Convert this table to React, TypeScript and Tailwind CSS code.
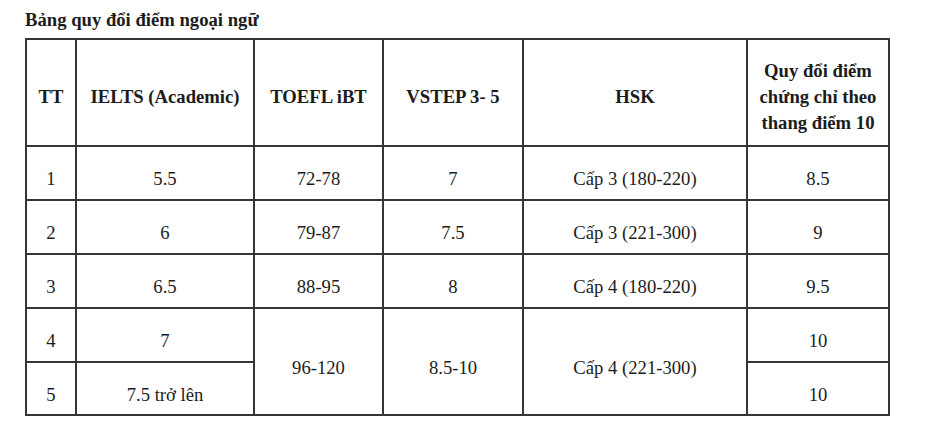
import React from 'react';

const head = 'border-2 border-[#363636] text-center align-middle pt-2 px-1';
const cell = 'border-2 border-[#363636] text-center align-middle pt-3 px-1';

const rows = [
  { tt: '1', ielts: '5.5', toefl: '72-78', vstep: '7', hsk: 'Cấp 3 (180-220)', score: '8.5' },
  { tt: '2', ielts: '6', toefl: '79-87', vstep: '7.5', hsk: 'Cấp 3 (221-300)', score: '9' },
  { tt: '3', ielts: '6.5', toefl: '88-95', vstep: '8', hsk: 'Cấp 4 (180-220)', score: '9.5' },
];

export default function App() {
  return (
    <div className="w-[952px] h-[432px] bg-white text-[#1c1c1c] font-[family-name:'Liberation_Serif','Times_New_Roman',serif] overflow-hidden">
      <h1 className="pl-[25px] pt-[8px] h-[38px] text-[18.67px] leading-[24px] font-bold">Bảng quy đổi điểm ngoại ngữ</h1>
      <table className="ml-[25px] w-[863px] border-collapse table-fixed text-[18.67px] leading-[26px]">
        <colgroup>
          <col className="w-[50px]" />
          <col className="w-[178px]" />
          <col className="w-[129px]" />
          <col className="w-[140px]" />
          <col className="w-[224px]" />
          <col className="w-[142px]" />
        </colgroup>
        <thead>
          <tr className="h-[107px] font-bold">
            <th className={head}>TT</th>
            <th className={head}>IELTS (Academic)</th>
            <th className={head}>TOEFL iBT</th>
            <th className={head}>VSTEP 3- 5</th>
            <th className={head}>HSK</th>
            <th className={head}>
              Quy đổi điểm
              <br />
              chứng chỉ theo
              <br />
              thang điểm 10
            </th>
          </tr>
        </thead>
        <tbody>
          {rows.map((r) => (
            <tr key={r.tt} className="h-[54px]">
              <td className={cell}>{r.tt}</td>
              <td className={cell}>{r.ielts}</td>
              <td className={cell}>{r.toefl}</td>
              <td className={cell}>{r.vstep}</td>
              <td className={cell}>{r.hsk}</td>
              <td className={cell}>{r.score}</td>
            </tr>
          ))}
          <tr className="h-[54px]">
            <td className={cell}>4</td>
            <td className={cell}>7</td>
            <td className={cell} rowSpan={2}>96-120</td>
            <td className={cell} rowSpan={2}>8.5-10</td>
            <td className={cell} rowSpan={2}>Cấp 4 (221-300)</td>
            <td className={cell}>10</td>
          </tr>
          <tr className="h-[53px]">
            <td className={cell}>5</td>
            <td className={cell}>7.5 trở lên</td>
            <td className={cell}>10</td>
          </tr>
        </tbody>
      </table>
    </div>
  );
}
